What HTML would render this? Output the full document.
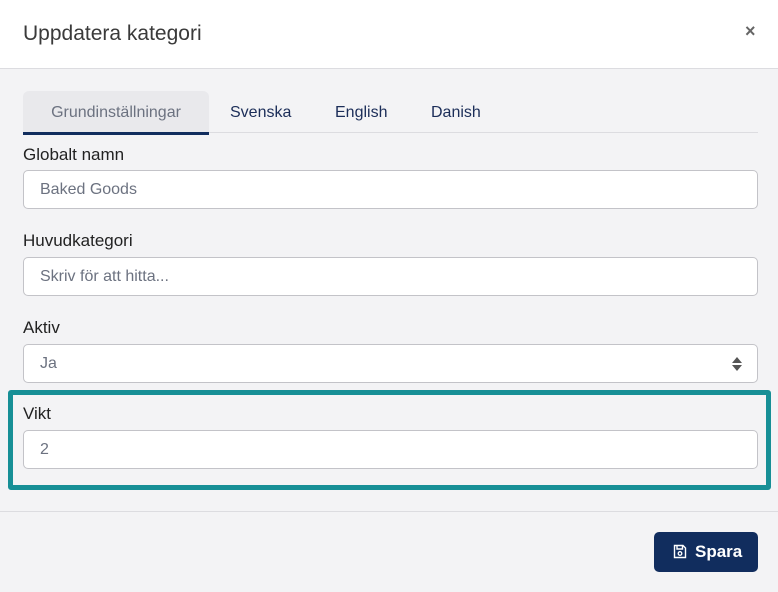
<!DOCTYPE html>
<html><head><style>
*{box-sizing:border-box;margin:0;padding:0}
body{width:778px;height:592px;background:#f3f3f5;font-family:"Liberation Sans",sans-serif;position:relative;overflow:hidden}
.hdr{position:absolute;left:0;top:0;width:778px;height:69px;background:#fff;border-bottom:1px solid #dcdce0}
.hdr h1{position:absolute;left:23px;top:22px;font-size:21px;font-weight:normal;color:#3a3a3a}
.x{position:absolute;left:745px;top:21px;font-size:18px;color:#666;font-weight:bold}
.tabline{position:absolute;left:23px;top:132px;width:735px;height:1px;background:#dcdce0}
.tab{position:absolute;top:104px;font-size:16px;color:#1b2d58}
.tab0{position:absolute;left:23px;top:91px;width:186px;height:44px;background:#e9e9ec;border-radius:6px 6px 0 0;border-bottom:3px solid #112d5e;color:#6c7280;font-size:16px;text-align:center;line-height:44px}
.lbl{position:absolute;left:23px;font-size:17px;color:#222}
.inp{position:absolute;left:23px;width:735px;height:39px;background:#fff;border:1px solid #c3c3c8;border-radius:5px;font-size:16px;color:#6c7280;padding-left:16px;line-height:38px}
.teal{position:absolute;left:8px;top:390px;width:763px;height:100px;border:5px solid #178f96;border-radius:3px}
.sep{position:absolute;left:0;top:511px;width:778px;height:1px;background:#dcdce0}
.btn{position:absolute;left:654px;top:532px;width:104px;height:40px;background:#112d5e;border-radius:5px;color:#fff;font-size:17px;font-weight:bold;line-height:40px;padding-left:41px}
</style></head><body>
<div class="hdr"><h1>Uppdatera kategori</h1><div class="x">×</div></div>
<div class="tabline"></div>
<div class="tab0">Grundinställningar</div>
<div class="tab" style="left:230px">Svenska</div>
<div class="tab" style="left:335px">English</div>
<div class="tab" style="left:431px">Danish</div>
<div class="lbl" style="top:145px">Globalt namn</div>
<div class="inp" style="top:170px">Baked Goods</div>
<div class="lbl" style="top:231px">Huvudkategori</div>
<div class="inp" style="top:257px">Skriv för att hitta...</div>
<div class="lbl" style="top:318px">Aktiv</div>
<div class="inp" style="top:344px">Ja<svg style="position:absolute;right:14px;top:11px" width="12" height="16" viewBox="0 0 12 16"><path d="M1 7L6 1L11 7Z M1 9L6 15L11 9Z" fill="#555"/></svg></div>
<div class="teal"></div>
<div class="lbl" style="top:404px">Vikt</div>
<div class="inp" style="top:430px">2</div>
<div class="sep"></div>
<div class="btn"><svg style="position:absolute;left:19px;top:12px" width="14" height="15" viewBox="0 0 14 15"><path d="M1.5 1.5H10L12.5 4V13.5H1.5Z M4 1.5V5H9.5V1.5" fill="none" stroke="#fff" stroke-width="1.4"/><circle cx="7" cy="9.5" r="1.8" fill="none" stroke="#fff" stroke-width="1.3"/></svg>Spara</div>
</body></html>
